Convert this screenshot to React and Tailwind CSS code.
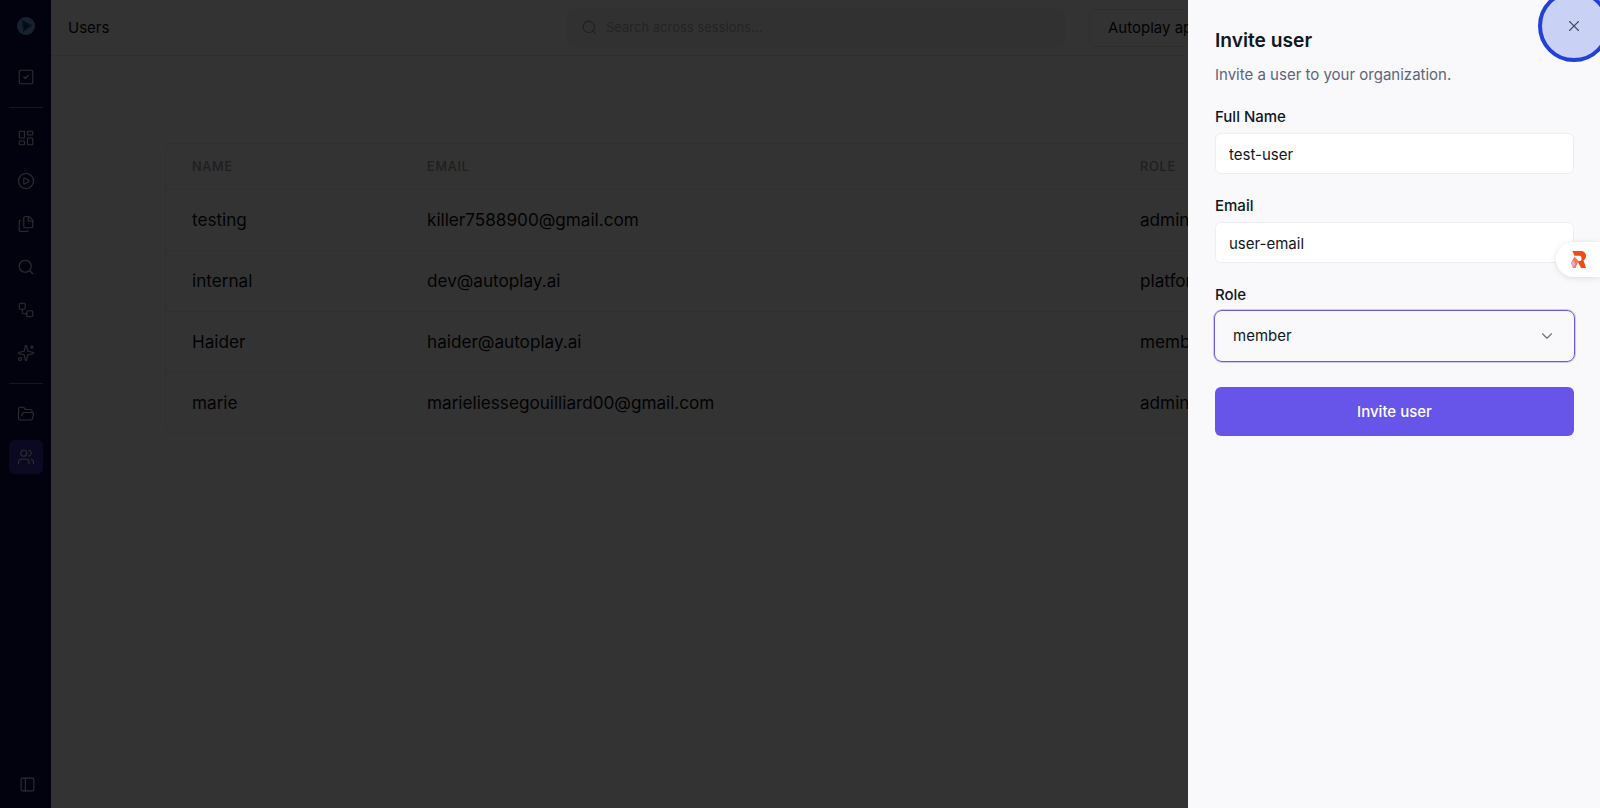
import {
  ChevronDown,
  Files,
  FolderOpen,
  LayoutDashboard,
  PanelLeft,
  PlayCircle,
  Search,
  Sparkles,
  SquareCheck,
  Users,
  Workflow,
  X,
} from 'lucide-react';

const users = [
  { name: 'testing', email: 'killer7588900@gmail.com', role: 'admin' },
  { name: 'internal', email: 'dev@autoplay.ai', role: 'platform' },
  { name: 'Haider', email: 'haider@autoplay.ai', role: 'member' },
  { name: 'marie', email: 'marieliessegouilliard00@gmail.com', role: 'admin' },
];

function NavIcon({ icon: Icon, className = '' }) {
  return (
    <div className={`flex h-[34px] w-[34px] items-center justify-center ${className}`}>
      <Icon size={18} strokeWidth={1.5} />
    </div>
  );
}

function Sidebar() {
  return (
    <aside className="flex h-full w-[51px] shrink-0 flex-col items-center bg-[#0e0e4a] text-[#dcdce2]">
      <svg className="mt-[17px] mb-[25px] shrink-0" width="18" height="18" viewBox="0 0 18 18">
        <circle cx="9" cy="9" r="9" fill="#6fb0e8" />
        <path d="M4.5 2 15.500 8.500 6 15.500Z" fill="#2a5fa8" />
        <path d="M7 5.500 12.500 8.700 7 12.500Z" fill="#0e2f6a" />
      </svg>
      <NavIcon icon={SquareCheck} />
      <div className="mt-[13px] mb-[13px] h-px w-[34px] bg-white/40" />
      <div className="flex flex-col gap-[9px]">
        <NavIcon icon={LayoutDashboard} />
        <NavIcon icon={PlayCircle} />
        <NavIcon icon={Files} />
        <NavIcon icon={Search} />
        <NavIcon icon={Workflow} />
        <NavIcon icon={Sparkles} />
      </div>
      <div className="mt-[13px] mb-[13px] h-px w-[34px] bg-white/40" />
      <NavIcon icon={FolderOpen} />
      <NavIcon icon={Users} className="mt-[9px] rounded-md bg-[#5a46e0]/60" />
      <div className="mt-auto mb-[15px] ml-[3px]">
        <PanelLeft size={17} strokeWidth={1.5} />
      </div>
    </aside>
  );
}

function Header() {
  return (
    <header className="flex h-[56px] shrink-0 items-center border-b border-[#ececf0] pl-[17px]">
      <div className="w-[499px] pt-[2px] text-[15px] text-[#0b0b14]">Users</div>
      <div className="flex h-[38px] w-[498px] items-center gap-[8px] rounded-md bg-[#f6f6f8] px-[14px] text-[#b0b0b8]">
        <Search size={17} strokeWidth={1.5} className="text-[#9a9aa3]" />
        <span className="text-[13px]">Search across sessions...</span>
      </div>
      <div className="ml-[24px] flex h-[38px] items-center whitespace-nowrap rounded-md border border-[#ececf0] px-[18px] pt-[1px] text-[15px] text-[#0b0b14]">
        Autoplay app
      </div>
    </header>
  );
}

function UsersTable() {
  return (
    <div className="mt-[87px] ml-[114px] mr-[114px] rounded-md border border-[#eeeef1]">
      <table className="w-full table-fixed border-collapse text-left">
        <colgroup>
          <col className="w-[261px]" />
          <col className="w-[713px]" />
          <col />
        </colgroup>
        <thead>
          <tr className="h-[45px] text-[12.7px] tracking-[0.06em] text-[#9a9aa3] uppercase">
            <th className="pl-[26px] font-medium">Name</th>
            <th className="font-medium">Email</th>
            <th className="font-medium">Role</th>
          </tr>
        </thead>
        <tbody className="text-[17.15px] text-[#0b0b14]">
          {users.map((user) => (
            <tr key={user.email} className="h-[61px] border-t border-[#eeeef1]">
              <td className="pl-[26px]">{user.name}</td>
              <td>{user.email}</td>
              <td>{user.role}</td>
            </tr>
          ))}
        </tbody>
      </table>
    </div>
  );
}

function Field({ label, value }) {
  return (
    <label className="block">
      <span className="block pt-[1px] text-[15px] leading-[20px] font-medium text-[#101624]">{label}</span>
      <input
        readOnly
        value={value}
        className="mt-[6px] h-[41px] w-full rounded-md border border-[#eeeef2] bg-white px-[13px] pt-[1px] text-[15px] text-[#101624] outline-none"
      />
    </label>
  );
}

function InviteDrawer() {
  return (
    <div className="absolute top-0 right-0 flex h-full w-[412px] flex-col overflow-hidden bg-[#f9f9fb] pr-[26px] pl-[27px]">
      <button className="absolute top-[-10px] left-[350px] flex h-[72px] w-[72px] items-center justify-center rounded-full border-4 border-[#2340d8] bg-[#c9d2f5] text-[#454a63]">
        <X size={18} strokeWidth={1.5} />
      </button>
      <h2 className="mt-[26px] text-[19.2px] leading-[28px] font-semibold text-[#101624]">Invite user</h2>
      <p className="mt-[9px] text-[15px] leading-[24px] text-[#5c667a]">Invite a user to your organization.</p>
      <div className="mt-[19px] flex flex-col gap-[21px]">
        <Field label="Full Name" value="test-user" />
        <Field label="Email" value="user-email" />
      </div>
      <div className="mt-[21px] pt-[1px] text-[15px] leading-[20px] font-medium text-[#101624]">Role</div>
      <div className="-mx-[1px] mt-[5px] flex h-[52px] items-center justify-between rounded-lg border border-[#6a5bd8] pr-[18px] pl-[18px] text-[15px] text-[#101624] shadow-[0_0_0_1px_rgba(106,91,216,0.3)]">
        <span>member</span>
        <ChevronDown size={18} strokeWidth={1.5} className="text-[#70707c]" />
      </div>
      <button className="mt-[25px] h-[49px] rounded-md bg-[#6655e8] pt-[2px] text-[15px] font-medium text-white">
        Invite user
      </button>
    </div>
  );
}

function FeedbackTab() {
  return (
    <div className="absolute top-[242px] right-0 flex h-[35px] w-[44px] items-center rounded-l-full bg-white pl-[15px] shadow-[0_1px_6px_rgba(0,0,0,0.12)]">
      <svg width="15" height="17" viewBox="0 0 15 17">
        <path d="M1.500 0h8.500C13 0 15 2.200 15 5c0 2-1 3.500-2.500 4.200L15 17h-5L6.500 10H9c1 0 1.500-.8 1.500-2.400 0-1.700-.6-2.900-1.800-2.900H3.500Z" fill="#f04a16" />
        <path d="M3.500 5.500 7.500 10 4.500 17H2L0 12Z" fill="#f4784e" />
        <path d="M0 12l2.500-2.500 2 3.500-2 3.500Z" fill="#e7a6e8" />
      </svg>
    </div>
  );
}

export default function App() {
  return (
    <div className="relative flex h-screen w-full overflow-hidden bg-white font-['Inter',sans-serif]">
      <Sidebar />
      <main className="flex min-w-0 flex-1 flex-col bg-[#fdfdfe]">
        <Header />
        <UsersTable />
      </main>
      <div className="absolute inset-0 bg-black/80" />
      <InviteDrawer />
      <FeedbackTab />
    </div>
  );
}
